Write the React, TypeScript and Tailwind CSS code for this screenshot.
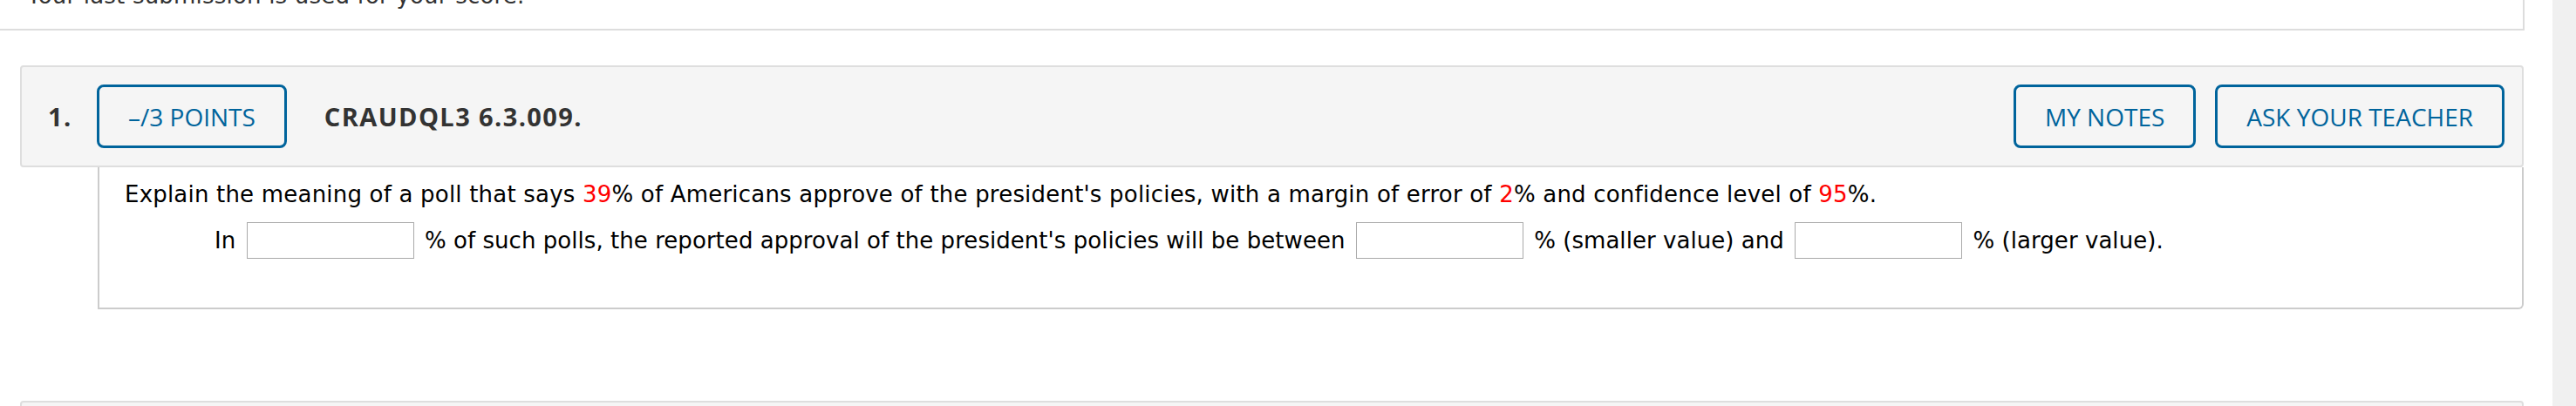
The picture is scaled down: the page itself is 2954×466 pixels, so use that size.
import React from "react";

const blue = "text-[#00649c] border-[#00649c]";

function Btn({ children }: { children: React.ReactNode }) {
  return (
    <div
      className={`h-[73px] px-[33px] flex items-center justify-center border-[3px] rounded-[8px] ${blue} text-[28px] font-['Open_Sans',sans-serif] whitespace-nowrap`}
    >
      {children}
    </div>
  );
}

function Blank() {
  return (
    <input
      type="text"
      className="w-[192px] h-[42px] mx-[4px] border border-[#aaaaaa] bg-white align-middle"
    />
  );
}

const Red = ({ children }: { children: React.ReactNode }) => (
  <span className="text-[#ff0000]">{children}</span>
);

export default function App() {
  return (
    <div className="w-[2954px] h-[466px] overflow-hidden bg-white flex">
      <div className="w-[2927px] shrink-0">
        {/* previous card tail */}
        <div className="w-[2895px] h-[35px] overflow-hidden border-b-2 border-r-2 border-[#dddddd]">
          <div className="mt-[-18px] pl-[31px] text-[26px] leading-[26px] tracking-[0.2px] text-[#333] font-['DejaVu_Sans',sans-serif] whitespace-nowrap">
            Your last submission is used for your score.
          </div>
        </div>

        {/* question */}
        <div className="mt-[40px] ml-[23px] w-[2871px]">
          <div className="h-[117px] bg-[#f5f5f5] border-2 border-[#dedede] rounded-[4px] flex items-center pl-[30px] pr-[20px] font-['Open_Sans',sans-serif]">
            <div className="text-[29px] font-bold tracking-[1.5px] text-[#333] w-[56px]">1.</div>
            <Btn>–/3 POINTS</Btn>
            <div className="ml-[43px] text-[29px] font-bold tracking-[1.4px] text-[#333]">CRAUDQL3 6.3.009.</div>
            <div className="ml-auto flex gap-[22px]">
              <Btn>MY NOTES</Btn>
              <Btn>ASK YOUR TEACHER</Btn>
            </div>
          </div>
          <div className="ml-[89px] h-[163px] border-l-2 border-r-2 border-b-2 border-[#cccccc] rounded-br-[6px] bg-white pl-[29px] pt-[13px] font-['DejaVu_Sans',sans-serif] text-[26px] leading-[36px] text-black">
            <div className="whitespace-nowrap tracking-[0.2px]">
              Explain the meaning of a poll that says <Red>39</Red>% of Americans approve of the president's policies, with a margin of error of <Red>2</Red>% and confidence level of <Red>95</Red>%.
            </div>
            <div className="mt-[14px] pl-[103px] flex items-center whitespace-pre h-[42px] tracking-[0.05px]">
              <span>In </span>
              <Blank />
              <span> % of such polls, the reported approval of the president's policies will be between </span>
              <Blank />
              <span> % (smaller value) and </span>
              <Blank />
              <span> % (larger value).</span>
            </div>
          </div>
        </div>

        {/* next question header */}
        <div className="mt-[105px] ml-[23px] w-[2871px] h-[117px] bg-[#f5f5f5] border-2 border-[#dedede] rounded-[4px]" />
      </div>
      <div className="flex-1 bg-[#f0f0f0]" />
    </div>
  );
}
